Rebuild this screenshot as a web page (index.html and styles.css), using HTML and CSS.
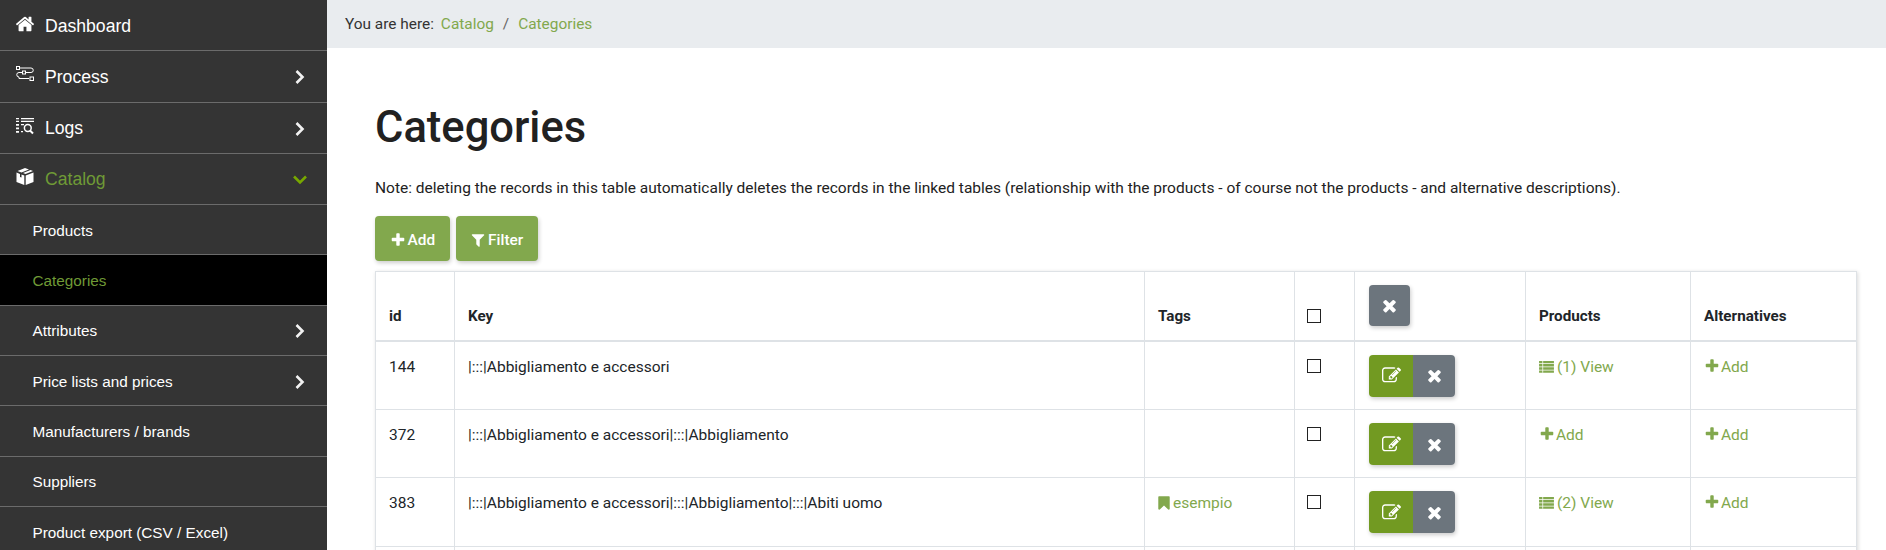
FILE: index.html
```html
<!DOCTYPE html>
<html lang="en">
<head>
<meta charset="utf-8">
<title>Categories</title>
<link rel="stylesheet" href="styles.css">
</head>
<body>
<svg class="defs" width="0" height="0" aria-hidden="true">
  <symbol id="i-plus" viewBox="0 0 1792 1792"><path d="M1600 736v192q0 40-28 68t-68 28h-416v416q0 40-28 68t-68 28h-192q-40 0-68-28t-28-68v-416h-416q-40 0-68-28t-28-68v-192q0-40 28-68t68-28h416v-416q0-40 28-68t68-28h192q40 0 68 28t28 68v416h416q40 0 68 28t28 68z"/></symbol>
  <symbol id="i-times" viewBox="0 0 1792 1792"><path d="M1490 1322q0 40-28 68l-136 136q-28 28-68 28t-68-28l-294-294-294 294q-28 28-68 28t-68-28l-136-136q-28-28-28-68t28-68l294-294-294-294q-28-28-28-68t28-68l136-136q28-28 68-28t68 28l294 294 294-294q28-28 68-28t68 28l136 136q28 28 28 68t-28 68l-294 294 294 294q28 28 28 68z"/></symbol>
  <symbol id="i-filter" viewBox="0 0 1792 1792"><path d="M1595 295q17 41-14 70l-493 493v742q0 42-39 59-13 5-25 5-27 0-45-19l-256-256q-19-19-19-45v-486l-493-493q-31-29-14-70 17-39 59-39h1280q42 0 59 39z"/></symbol>
  <symbol id="i-bookmark" viewBox="0 0 1792 1792"><path d="M1420 128q23 0 44 9 33 13 52.5 41t19.5 62v1289q0 34-19.5 62t-52.5 41q-19 8-44 8-48 0-83-32l-441-424-441 424q-36 33-83 33-23 0-44-9-33-13-52.5-41t-19.5-62v-1289q0-34 19.5-62t52.5-41q21-9 44-9h1048z"/></symbol>
  <symbol id="i-edit" viewBox="0 0 1792 1792"><path d="M888 1184l116-116-152-152-116 116v56h96v96h56zm440-720q-16-16-33 1l-350 350q-17 17-1 33t33-1l350-350q17-17 1-33zm80 594v190q0 119-84.5 203.5t-203.5 84.5h-832q-119 0-203.5-84.5t-84.5-203.5v-832q0-119 84.5-203.5t203.5-84.5h832q63 0 117 25 15 7 18 23 3 17-9 29l-49 49q-14 14-32 8-23-6-45-6h-832q-66 0-113 47t-47 113v832q0 66 47 113t113 47h832q66 0 113-47t47-113v-126q0-13 9-22l64-64q15-15 35-7t20 29zm-96-738l288 288-672 672h-288v-288zm444 132l-92 92-288-288 92-92q28-28 68-28t68 28l152 152q28 28 28 68t-28 68z"/></symbol>
  <symbol id="i-home" viewBox="0 0 1792 1792"><path d="M1472 992v480q0 26-19 45t-45 19h-384v-384h-256v384h-384q-26 0-45-19t-19-45v-480q0-1 .5-3t.5-3l575-474 575 474q1 2 1 6zm223-69l-62 74q-8 9-21 11h-3q-13 0-21-7l-692-577-692 577q-12 8-24 7-13-2-21-11l-62-74q-8-10-7-23.5t11-21.5l719-599q32-26 76-26t76 26l244 204v-195q0-14 9-23t23-9h192q14 0 23 9t9 23v408l219 182q10 8 11 21.5t-7 23.5z"/></symbol>
  <symbol id="i-list" viewBox="0 0 16 14"><path d="M0 1h16v2.6H0zM0 4.4h16V7H0zM0 7.8h16v2.6H0zM0 11.2h16v2.6H0z"/><path class="list-gap" d="M3.6 1h.8v12.8h-.8z"/></symbol>
  <symbol id="i-next" viewBox="0 0 12 16"><path d="M2.5 2l6 6-6 6" fill="none" stroke="currentColor" stroke-width="2.6"/></symbol>
  <symbol id="i-down" viewBox="0 0 16 12"><path d="M2 2.5l6 6 6-6" fill="none" stroke="currentColor" stroke-width="2.6"/></symbol>
  <symbol id="i-process" viewBox="0 0 18 16"><g fill="none" stroke="currentColor" stroke-width="1"><rect x=".5" y=".5" width="3" height="3"/><path d="M3.5 2h11.5a2 2 0 0 1 0 4.5H10"/><rect x="6.5" y="5" width="3" height="3"/><path d="M6.500 6.500H3a2 2 0 0 0 0 4.500v1.500h10"/><rect x="14" y="11" width="3.500" height="3.500"/></g></symbol>
  <symbol id="i-logs" viewBox="0 0 18 17"><path d="M5 .5h13v1.300H5zM0 .5h3v1.300H0zM5 3.300h13v1.300H5zM0 3.300h3v1.300H0zM0 6.500h3v1.800H0zM0 10h3v1.800H0zM0 13.500h3v1.800H0zM5 6.500h3v1.300H5zM5 13.500h2v1.300H5z"/><circle cx="11.800" cy="10.500" r="3.400" fill="none" stroke="currentColor" stroke-width="1.500"/><path d="M14 13l3 3" fill="none" stroke="currentColor" stroke-width="2"/></symbol>
  <symbol id="i-box" viewBox="0 0 18 18"><path d="M9 0l4 1.500L5.500 4.500 1.500 3zM14.500 2l2.500 1-7.500 3L7 5zM.5 4.500l3.500 1.400v3l1.500.6V6.500L8.300 7.600V17L.5 14zM17.500 4.500v9.500L9.700 17V7.600z"/></symbol>
</svg>
<div class="app">
  <nav class="sidebar">
    <a class="nav-main" href="#"><svg class="nav-icon home"><use href="#i-home"/></svg><span>Dashboard</span></a>
    <a class="nav-main" href="#"><svg class="nav-icon"><use href="#i-process"/></svg><span>Process</span><svg class="chev"><use href="#i-next"/></svg></a>
    <a class="nav-main" href="#"><svg class="nav-icon"><use href="#i-logs"/></svg><span>Logs</span><svg class="chev"><use href="#i-next"/></svg></a>
    <a class="nav-main open" href="#"><svg class="nav-icon"><use href="#i-box"/></svg><span>Catalog</span><svg class="chev down"><use href="#i-down"/></svg></a>
    <a class="nav-sub" href="#"><span>Products</span></a>
    <a class="nav-sub current" href="#"><span>Categories</span></a>
    <a class="nav-sub" href="#"><span>Attributes</span><svg class="chev"><use href="#i-next"/></svg></a>
    <a class="nav-sub" href="#"><span>Price lists and prices</span><svg class="chev"><use href="#i-next"/></svg></a>
    <a class="nav-sub" href="#"><span>Manufacturers / brands</span></a>
    <a class="nav-sub" href="#"><span>Suppliers</span></a>
    <a class="nav-sub" href="#"><span>Product export (CSV / Excel)</span></a>
  </nav>
  <main class="main">
    <div class="crumbs">
      <span class="crumb-label">You are here:</span>
      <a href="#">Catalog</a>
      <span class="crumb-sep">/</span>
      <a href="#">Categories</a>
    </div>
    <div class="content">
      <h1>Categories</h1>
      <p class="note">Note: deleting the records in this table automatically deletes the records in the linked tables (relationship with the products - of course not the products - and alternative descriptions).</p>
      <div class="actions">
        <a class="btn green" href="#"><svg class="ico"><use href="#i-plus"/></svg>Add</a>
        <a class="btn green" href="#"><svg class="ico"><use href="#i-filter"/></svg>Filter</a>
      </div>
      <table class="grid">
        <colgroup>
          <col class="c-id"><col class="c-key"><col class="c-tags"><col class="c-check"><col class="c-ops"><col class="c-prod"><col class="c-alt">
        </colgroup>
        <thead>
          <tr>
            <th>id</th><th>Key</th><th>Tags</th>
            <th><input class="check" type="checkbox"></th>
            <th><a class="sq gray head-x" href="#"><svg class="ico-x"><use href="#i-times"/></svg></a></th>
            <th>Products</th><th>Alternatives</th>
          </tr>
        </thead>
        <tbody>
          <tr>
            <td>144</td><td>|:::|Abbigliamento e accessori</td><td></td>
            <td><input class="check" type="checkbox"></td>
            <td><div class="pair"><a class="sq edit" href="#"><svg class="ico-edit"><use href="#i-edit"/></svg></a><a class="sq gray" href="#"><svg class="ico-x"><use href="#i-times"/></svg></a></div></td>
            <td><a class="lnk" href="#"><svg class="ico-list"><use href="#i-list"/></svg>(1) View</a></td>
            <td><a class="lnk" href="#"><svg class="ico"><use href="#i-plus"/></svg>Add</a></td>
          </tr>
          <tr>
            <td>372</td><td>|:::|Abbigliamento e accessori|:::|Abbigliamento</td><td></td>
            <td><input class="check" type="checkbox"></td>
            <td><div class="pair"><a class="sq edit" href="#"><svg class="ico-edit"><use href="#i-edit"/></svg></a><a class="sq gray" href="#"><svg class="ico-x"><use href="#i-times"/></svg></a></div></td>
            <td><a class="lnk" href="#"><svg class="ico"><use href="#i-plus"/></svg>Add</a></td>
            <td><a class="lnk" href="#"><svg class="ico"><use href="#i-plus"/></svg>Add</a></td>
          </tr>
          <tr>
            <td>383</td><td>|:::|Abbigliamento e accessori|:::|Abbigliamento|:::|Abiti uomo</td>
            <td><a class="lnk" href="#"><svg class="ico-tag"><use href="#i-bookmark"/></svg>esempio</a></td>
            <td><input class="check" type="checkbox"></td>
            <td><div class="pair"><a class="sq edit" href="#"><svg class="ico-edit"><use href="#i-edit"/></svg></a><a class="sq gray" href="#"><svg class="ico-x"><use href="#i-times"/></svg></a></div></td>
            <td><a class="lnk" href="#"><svg class="ico-list"><use href="#i-list"/></svg>(2) View</a></td>
            <td><a class="lnk" href="#"><svg class="ico"><use href="#i-plus"/></svg>Add</a></td>
          </tr>
          <tr class="cut"><td></td><td></td><td></td><td></td><td></td><td></td><td></td></tr>
        </tbody>
      </table>
    </div>
  </main>
</div>
</body>
</html>
```
FILE: styles.css
```css
* { box-sizing: border-box; }
html, body { margin: 0; height: 550px; overflow: hidden; background: #fff; }
body { font-family: Roboto, "Liberation Sans", sans-serif; font-size: 15.4px; color: #212529; }
a { text-decoration: none; }
.defs { position: absolute; }
svg { fill: currentColor; }
.app { display: flex; height: 550px; overflow: hidden; }

/* sidebar */
.sidebar { flex: 0 0 327px; height: 550px; overflow: hidden; background: #343434; font-family: "Liberation Sans", Arial, sans-serif; color: #fff; }
.sidebar a { display: flex; align-items: center; color: #fff; border-bottom: 1px solid #6b6b6b; }
.nav-main { height: 51.25px; padding: 2px 21px 0 16px; font-size: 17.6px; }
.nav-sub { height: 50.33px; padding: 2px 21px 0 32.500px; font-size: 15.3px; }
.nav-icon { width: 18px; height: 18px; margin-right: 11px; flex: none; position: relative; top: -3px; }
.nav-icon.home { width: 20px; height: 20px; margin: 0 10px 0 -1px; top: -2px; }
.nav-main span, .nav-sub span { flex: 1; }
.chev { width: 12px; height: 16px; flex: none; color: #f2f2f2; }
.chev.down { width: 16px; height: 12px; color: #78a800; margin-right: -2px; }
.sidebar a.open { color: #6f9a36; }
.open .nav-icon { color: #fff; }
.sidebar a.current { background: #000; color: #6f9a36; }

/* main */
.main { flex: 1; min-width: 0; height: 550px; overflow: hidden; }
.crumbs { height: 48px; background: #e9ecef; padding: 0 18px; display: flex; align-items: center; font-size: 15.4px; color: #333; }
.crumb-label { margin-right: 7px; }
.crumbs a { color: #82a84d; }
.crumb-sep { margin: 0 9px; color: #666; }
.content { padding: 0 30px 0 48px; }
h1 { margin: 54px 0 0; font-size: 43.5px; line-height: 52px; font-weight: 500; color: #212121; }
.note { margin: 24px 0 0; font-size: 15.5px; line-height: 20px; color: #222; }
.actions { display: flex; gap: 6px; margin-top: 18px; }
.btn { display: flex; align-items: center; height: 45px; padding: 2px 14.5px 0; border-radius: 4px; font-size: 15.4px; font-weight: 500; color: #fff; box-shadow: 1px 2px 4px rgba(0,0,0,.2); }
.btn.green { background: #82a84d; }
.ico { width: 16px; height: 16px; margin-right: 1px; flex: none; vertical-align: -2px; }
.btn .ico { margin-right: 2px; }

/* table */
.grid { width: 1481px; margin-top: 10px; border-collapse: collapse; table-layout: fixed; font-size: 15.5px; border: 1px solid #dee2e6; box-shadow: 1px 1px 4px rgba(0,0,0,.15); }
.c-id { width: 79px; } .c-key { width: 690px; } .c-tags { width: 150px; } .c-check { width: 60px; }
.c-ops { width: 171px; } .c-prod { width: 165px; } .c-alt { width: 166px; }
th, td { border: 1px solid #dee2e6; padding: 15px 13px 12px; text-align: left; vertical-align: top; }
thead th { height: 69px; vertical-align: bottom; border-bottom: 2px solid #dee2e6; font-weight: 700; padding-bottom: 15px; font-size: 15.2px; }
tbody tr { height: 68px; }
tbody tr:first-child { height: 69px; }
tbody tr:nth-child(3) { height: 69px; }
th:nth-child(4), td:nth-child(4) { padding-left: 12px; }
td:nth-child(5), th:nth-child(5) { padding: 13px 14px 12px; }
th:nth-child(5) { padding: 12px 14px 13px; }
.check { appearance: none; display: block; width: 14px; height: 14px; margin: 2px 0 0; border: 1px solid #222; background: #fff; }
th .check { margin: 0 0 2px; }
.sq { display: inline-flex; align-items: center; justify-content: center; width: 42px; height: 42px; color: #fff; vertical-align: top; }
.gray { background: #6c757d; }
.edit { background: #729a22; width: 44px; }
.head-x { display: flex; width: 41px; height: 41px; margin-bottom: 1px; border-radius: 4px; box-shadow: 1px 2px 4px rgba(0,0,0,.2); }
.pair { display: inline-flex; border-radius: 4px; overflow: hidden; box-shadow: 1px 2px 4px rgba(0,0,0,.2); }
.ico-x { width: 19px; height: 19px; }
.ico-edit { width: 19px; height: 19px; }
.lnk { color: #82a84d; white-space: nowrap; }
.ico-list { width: 15px; height: 13px; margin-right: 3px; vertical-align: -1px; }
.ico-tag { width: 16px; height: 16px; margin: 0 1px 0 -2px; vertical-align: -3px; }
.list-gap { fill: #fff; }
td:nth-child(1), td:nth-child(2), td:nth-child(3), td:nth-child(6), td:nth-child(7) { padding-top: 16px; }
```
